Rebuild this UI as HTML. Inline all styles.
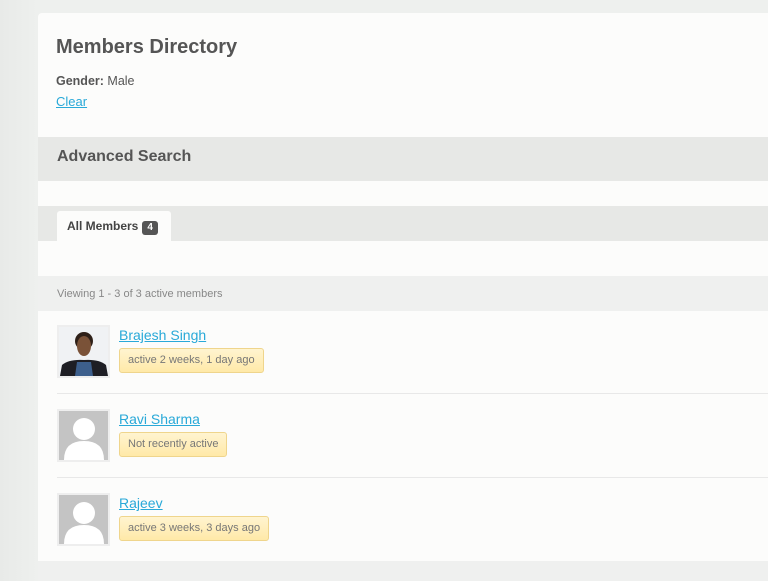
<!DOCTYPE html>
<html><head><style>
*{margin:0;padding:0;box-sizing:border-box}
body{width:768px;height:567px;overflow:hidden;background:linear-gradient(90deg,#e8eae8,#eef0ee 38px);font-family:"Liberation Sans",sans-serif;position:relative}
.panel{position:absolute;left:38px;top:13px;width:740px;height:560px;background:#fcfcfb;border-top-left-radius:4px}
.a{position:absolute}
h1{position:absolute;left:18px;top:23px;font-size:20px;color:#555;font-weight:bold}
.link{color:#29a9d8;text-decoration:underline}
.band{position:absolute;left:0;right:0;background:#e7e8e6}
.badge{display:inline-block;background:#555;color:#fff;font-size:10px;font-weight:bold;padding:1px 5px;border-radius:3px;margin-left:4px;line-height:12px}
.av{position:absolute;left:19px;width:53px;height:53px;border:2px solid #eee;background:#c4c4c4;overflow:hidden}
.name{position:absolute;left:81px;font-size:14px}
.st{position:absolute;left:81px;height:25px;border:1px solid #efd58c;background:linear-gradient(#fff4d0,#ffe9a8);border-radius:3px;font-size:11px;color:#777;padding:0 8px;line-height:23px}
.div{position:absolute;left:19px;right:0;height:1px;background:#e8e8e8}
</style></head><body>
<div class="panel">
<h1>Members Directory</h1>
<div class="a" style="left:18px;top:61px;font-size:12.5px;color:#555"><b>Gender:</b> Male</div>
<div class="a link" style="left:18px;top:81px;font-size:13px">Clear</div>
<div class="band" style="top:124px;height:44px"><div class="a" style="left:19px;top:11px;font-size:16px;font-weight:bold;color:#555">Advanced Search</div></div>
<div class="band" style="top:193px;height:35px"><div class="a" style="left:19px;top:5px;width:114px;height:30px;background:#fcfcfb;border-radius:3px 3px 0 0;font-size:12px;font-weight:bold;color:#444;padding:8px 0 0 10px">All Members<span class="badge">4</span></div></div>
<div class="band" style="top:263px;height:35px;background:#eff0ef"><div class="a" style="left:19px;top:12px;font-size:11px;color:#888">Viewing 1 - 3 of 3 active members</div></div>
<div class="av" style="top:312px;background:#f0f2f4">
<svg width="49" height="49"><circle cx="25" cy="14" r="9" fill="#2e2018"/><ellipse cx="25" cy="19" rx="7" ry="10" fill="#7a5238"/><path d="M1 49 L3 38 Q10 32 25 33 Q40 32 47 38 L49 49Z" fill="#1e1e24"/><path d="M16 49 L18 35 L32 35 L34 49Z" fill="#3d5f8c"/></svg></div>
<div class="name link" style="top:314px">Brajesh Singh</div>
<div class="st" style="top:335px">active 2 weeks, 1 day ago</div>
<div class="div" style="top:380px"></div>
<div class="av" style="top:396px"><svg width="49" height="49"><circle cx="25" cy="18" r="11" fill="#fff"/><path d="M5 49 Q5 30 25 30 Q45 30 45 49Z" fill="#fff"/></svg></div>
<div class="name link" style="top:398px">Ravi Sharma</div>
<div class="st" style="top:419px">Not recently active</div>
<div class="div" style="top:464px"></div>
<div class="av" style="top:480px"><svg width="49" height="49"><circle cx="25" cy="18" r="11" fill="#fff"/><path d="M5 49 Q5 30 25 30 Q45 30 45 49Z" fill="#fff"/></svg></div>
<div class="name link" style="top:482px">Rajeev</div>
<div class="st" style="top:503px">active 3 weeks, 3 days ago</div>
<div class="band" style="top:548px;height:20px;background:#eff0ef"></div>
</div>
</body></html>
